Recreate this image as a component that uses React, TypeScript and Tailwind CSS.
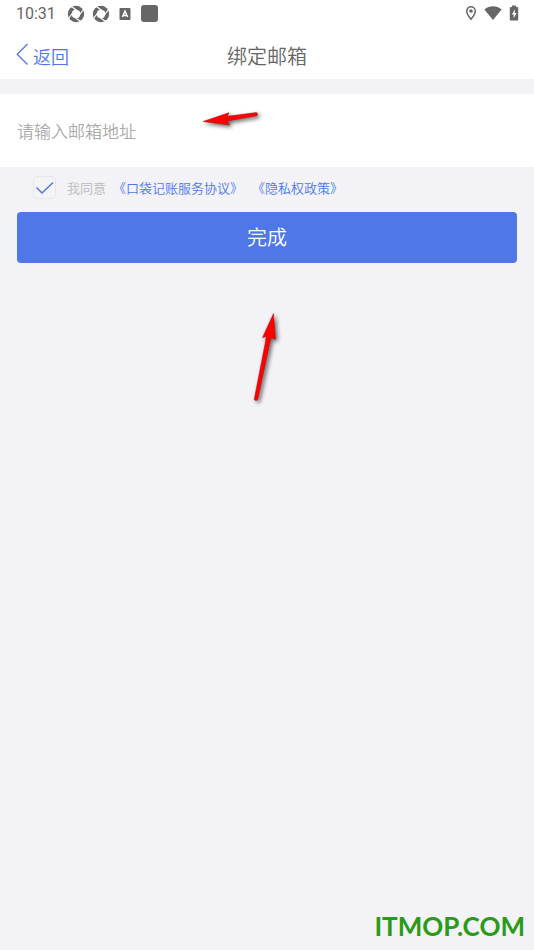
import React, { useState } from 'react';

const ApertureIcon = () => (
  <svg viewBox="0 0 18 18" className="h-[18px] w-[18px]" aria-hidden="true">
    <circle cx="9" cy="9" r="8.2" fill="#666" />
    <path d="M9 4.300 12.500 6 13.700 9 12 12.500 9 13.700 5.500 12 4.300 9 6 5.500Z" fill="#fff" />
    <g stroke="#fff" strokeWidth="1.2">
      <path d="M9 4.800 4 1.200" />
      <path d="M13.200 9 16.800 4" />
      <path d="M9 13.200 14 16.800" />
      <path d="M4.800 9 1.200 14" />
    </g>
  </svg>
);

const LetterIcon = () => (
  <svg viewBox="0 0 12 12" className="h-3 w-3" aria-hidden="true">
    <rect x=".5" y="0" width="11" height="12" rx="1" fill="#666" />
    <path d="M3.400 9 6 3.200 8.600 9M4.400 7.400h3.200" fill="none" stroke="#fff" strokeWidth="1.5" />
  </svg>
);

const PinIcon = () => (
  <svg viewBox="0 0 12 16" className="h-4 w-3" aria-hidden="true">
    <path
      d="M6 1.700a4.300 4.300 0 0 0-4.300 4.300C1.700 9.200 6 14.200 6 14.200S10.300 9.200 10.300 6A4.300 4.300 0 0 0 6 1.700Z"
      fill="none"
      stroke="#666"
      strokeWidth="1.5"
    />
    <circle cx="6" cy="6" r="1.8" fill="#666" />
  </svg>
);

const WifiIcon = () => (
  <svg viewBox="0 0 18 14" className="h-[14px] w-[18px]" aria-hidden="true">
    <path d="M9 14 .4 3.400C3 1.200 5.800.200 9 .200s6 1 8.600 3.200Z" fill="#666" />
  </svg>
);

const BatteryIcon = () => (
  <svg viewBox="0 0 10 16" className="h-4 w-[10px]" aria-hidden="true">
    <path d="M3 .5h4V2h1.200a1 1 0 0 1 1 1v11.500a1 1 0 0 1-1 1H1.800a1 1 0 0 1-1-1V3a1 1 0 0 1 1-1H3Z" fill="#666" />
    <path d="M6 4.300 2.900 9.400h1.800v3.800l2.900-5.300H5.700Z" fill="#fff" />
  </svg>
);

const StatusBar = () => (
  <div className="flex h-7 items-center justify-between pl-4 pr-[15px] text-[#666]">
    <div className="flex items-center">
      <span className="w-[51px] font-[Roboto,sans-serif] text-base font-normal leading-7">10:31</span>
      <div className="flex items-center gap-[7px] pb-px">
        <ApertureIcon />
        <ApertureIcon />
      </div>
      <span className="ml-[9px] flex items-center gap-[10px] pb-px">
        <LetterIcon />
        <span className="h-[17px] w-[17px] rounded-[3px] bg-[#666]" />
      </span>
    </div>
    <div className="flex items-center gap-[7px] pb-0.5">
      <PinIcon />
      <WifiIcon />
      <BatteryIcon />
    </div>
  </div>
);

const App = () => {
  const [email, setEmail] = useState('');
  const [agreed, setAgreed] = useState(true);

  return (
    <div className="flex min-h-screen flex-col bg-[#f2f2f7] font-['Noto_Sans_CJK_SC',sans-serif] font-[350]">
      <div className="bg-white">
        <StatusBar />
        <header className="grid h-[51px] grid-cols-3 items-center px-4 pb-1 pt-2">
          <button type="button" className="flex items-center gap-1 justify-self-start text-lg leading-7 text-[#4f77e7]">
            <svg viewBox="0 0 13 24" className="mb-1 h-6 w-[13px]" fill="none" stroke="currentColor" strokeWidth="1.3" aria-hidden="true">
              <path d="M11.500 2 1.200 12.200 11.500 22.500" />
            </svg>
            返回
          </button>
          <h1 className="text-center text-xl leading-7 text-[#666]">绑定邮箱</h1>
        </header>
      </div>

      <form className="mt-[15px]" onSubmit={(e) => e.preventDefault()}>
        <div className="relative bg-white">
          <input
            type="email"
            aria-label="邮箱地址"
            placeholder="请输入邮箱地址"
            value={email}
            onChange={(e) => setEmail(e.target.value)}
            className="block h-[73px] w-full px-[17px] text-[17px] text-[#666] outline-none placeholder:text-[#aaa]"
          />
          {/* Pointer to the input */}
          <svg
            viewBox="0 0 64 26"
            className="pointer-events-none absolute left-[200px] top-[14px] h-[26px] w-16 overflow-visible drop-shadow-[2px_2px_2px_rgba(0,0,0,0.6)]"
            aria-hidden="true"
          >
            <path d="M3 13.500 29 4.700 27.500 8.300 56.500 4.500 57.800 6 57 7.800 27.500 13 29.500 17Z" fill="#fe0000" stroke="#a01515" strokeWidth=".5" />
          </svg>
        </div>

        <div className="flex h-[45px] items-center pb-1 pl-[33px] text-[13px] leading-5">
          <span className="relative mr-[11px] h-[23px] w-[23px]">
            <input
              id="agree"
              type="checkbox"
              checked={agreed}
              onChange={(e) => setAgreed(e.target.checked)}
              className="peer block h-full w-full appearance-none rounded-[5px] border border-[#e6e6ea] bg-[#f4f4f8]"
            />
            <svg
              viewBox="0 0 23 23"
              className="pointer-events-none absolute inset-0 hidden peer-checked:block"
              fill="none"
              stroke="#4f77e7"
              strokeWidth="1.5"
              aria-hidden="true"
            >
              <path d="M3.500 11.500 9 17 20 6.500" />
            </svg>
          </span>
          <label htmlFor="agree" className="mr-[7px] text-[#bbb]">我同意</label>
          <a href="#terms" className="mr-[9px] text-[#4f77e7]">《口袋记账服务协议》</a>
          <a href="#privacy" className="text-[#4f77e7]">《隐私权政策》</a>
        </div>

        <div className="relative px-[17px]">
          <button type="submit" className="block h-[51px] w-full rounded bg-[#4f77e7] pb-0.5 text-xl text-white">
            完成
          </button>
          {/* Pointer to the submit button */}
          <svg
            viewBox="0 0 32 92"
            className="pointer-events-none absolute left-[250px] top-[100px] h-[92px] w-8 overflow-visible drop-shadow-[2px_2px_2px_rgba(0,0,0,0.6)]"
            aria-hidden="true"
          >
            <path d="M23.500 1.500 25.500 27.500 21 25.500 7.800 87.500 6 88.800 4.200 87.500 16.500 24.500 12.500 25.500Z" fill="#fe0000" stroke="#a01515" strokeWidth=".5" />
          </svg>
        </div>
      </form>

      <footer className="mt-auto self-end pb-1.5 pr-[9px] font-[Lato,sans-serif] text-[26px] font-bold leading-9 text-[#2b9a17]">
        ITMOP.COM
      </footer>
    </div>
  );
};

export default App;
